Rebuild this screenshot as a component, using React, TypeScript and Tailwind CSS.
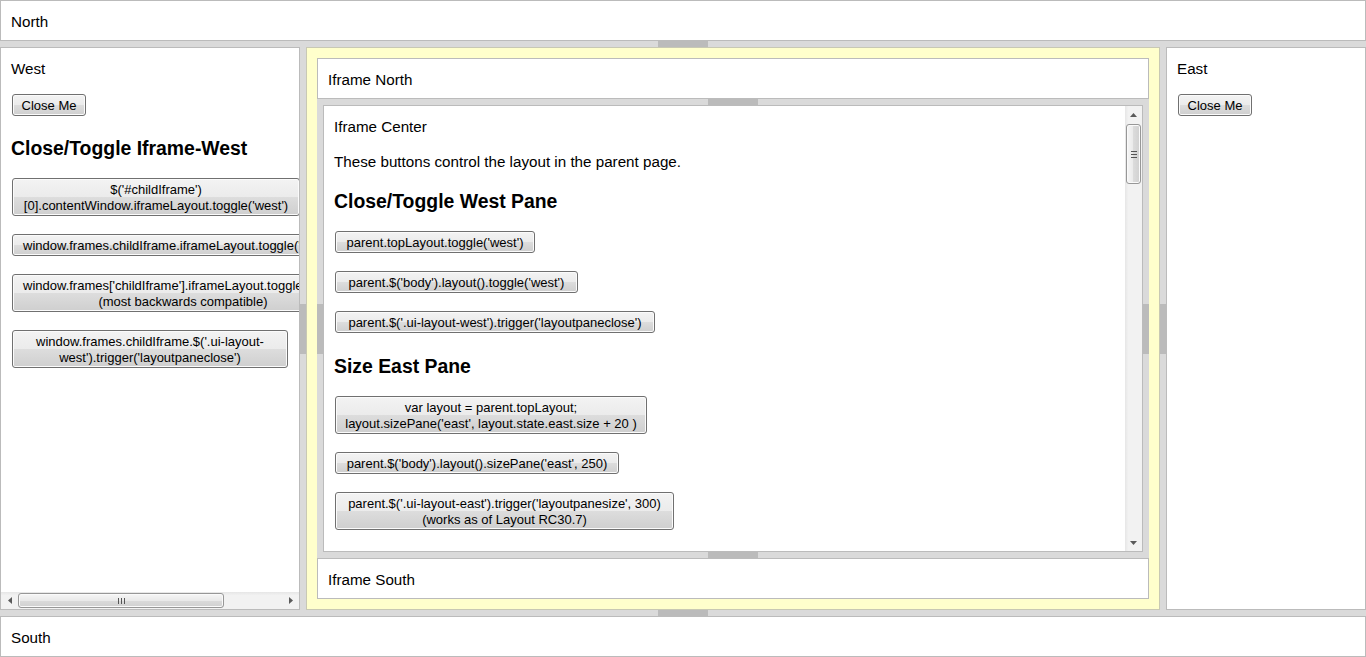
import React from 'react';

// Win7-ish push button
const Btn: React.FC<{ className?: string; children: React.ReactNode }> = ({ className = '', children }) => (
  <button
    type="button"
    className={`block shrink-0 ml-px border border-[#707070] rounded-[3px] bg-[linear-gradient(#f3f3f3,#ebebeb_50%,#dddddd_50%,#cfcfcf)] shadow-[inset_0_0_0_1px_#fbfbfb] pt-[3px] pb-[1px] text-center text-[13px] leading-[16px] text-black whitespace-nowrap ${className}`}
  >
    {children}
  </button>
);

const HResizer: React.FC = () => (
  <div className="h-[6px] shrink-0 flex justify-center">
    <div className="w-[50px] h-full bg-[#bbbbbb]" />
  </div>
);

const VResizer: React.FC = () => (
  <div className="w-[6px] shrink-0 flex items-center">
    <div className="h-[50px] w-full bg-[#bbbbbb]" />
  </div>
);

const Arrow: React.FC<{ dir: 'up' | 'down' | 'left' | 'right' }> = ({ dir }) => {
  const pts = {
    up: '0,4 3.5,0 7,4',
    down: '0,0 7,0 3.5,4',
    left: '4,0 4,7 0,3.5',
    right: '0,0 0,7 4,3.5',
  }[dir];
  const vert = dir === 'up' || dir === 'down';
  return (
    <svg width={vert ? 7 : 4} height={vert ? 4 : 7} viewBox={vert ? '0 0 7 4' : '0 0 4 7'}>
      <polygon points={pts} fill="#5a5a5a" />
    </svg>
  );
};

const HScrollbar: React.FC = () => (
  <div className="h-[17px] shrink-0 flex bg-[linear-gradient(#e6e6e6,#f2f2f2_20%,#f2f2f2)]">
    <div className="w-[17px] flex items-center justify-center">
      <Arrow dir="left" />
    </div>
    <div className="flex-1 flex items-center">
      <div className="w-[206px] h-[15px] border border-[#979797] rounded-[3px] bg-[linear-gradient(#f6f6f6,#e9e9e9_50%,#dbdbdb_50%,#d0d0d0)] shadow-[inset_0_0_0_1px_#fafafa] flex items-center justify-center gap-[2px]">
        <div className="w-px h-[6px] bg-[#555]" />
        <div className="w-px h-[6px] bg-[#555]" />
        <div className="w-px h-[6px] bg-[#555]" />
      </div>
    </div>
    <div className="w-[17px] flex items-center justify-center">
      <Arrow dir="right" />
    </div>
  </div>
);

const VScrollbar: React.FC = () => (
  <div className="w-[17px] shrink-0 flex flex-col bg-[linear-gradient(90deg,#e6e6e6,#f2f2f2_20%,#f2f2f2)]">
    <div className="h-[17px] flex items-center justify-center">
      <Arrow dir="up" />
    </div>
    <div className="flex-1 flex flex-col items-center">
      <div className="h-[60px] w-[15px] mt-px border border-[#979797] rounded-[3px] bg-[linear-gradient(90deg,#f6f6f6,#e9e9e9_50%,#dbdbdb_50%,#d0d0d0)] shadow-[inset_0_0_0_1px_#fafafa] flex flex-col items-center justify-center gap-[2px]">
        <div className="h-px w-[6px] bg-[#555]" />
        <div className="h-px w-[6px] bg-[#555]" />
        <div className="h-px w-[6px] bg-[#555]" />
      </div>
    </div>
    <div className="h-[17px] flex items-center justify-center">
      <Arrow dir="down" />
    </div>
  </div>
);

const Bar: React.FC<{ label: string; className?: string }> = ({ label, className = '' }) => (
  <div className={`h-[41px] shrink-0 bg-white border border-[#bbbbbb] pl-[10px] pt-[12px] leading-[18px] ${className}`}>
    {label}
  </div>
);

const h3 = 'font-bold text-[19.4px] leading-[22px]';

const App: React.FC = () => {
  return (
    <div className="w-[1366px] h-[657px] overflow-hidden bg-[#dadada] flex flex-col text-black text-[15.2px] font-['Liberation_Sans',Arial,sans-serif]">
      <Bar label="North" />
      <HResizer />

      <div className="h-[563px] flex">
        {/* West */}
        <div className="w-[300px] shrink-0 bg-white border border-[#bbbbbb] flex flex-col">
          <div className="flex-1 overflow-hidden pl-[10px] pt-[12px] flex flex-col items-start">
            <div className="leading-[18px]">West</div>
            <Btn className="mt-[16px] w-[74px]">Close Me</Btn>
            <h3 className={`mt-[21px] ${h3}`}>Close/Toggle Iframe-West</h3>
            <Btn className="mt-[19px] w-[288px]">
              $('#childIframe')
              <br />
              [0].contentWindow.iframeLayout.toggle('west')
            </Btn>
            <Btn className="mt-[18px] px-[10px]">window.frames.childIframe.iframeLayout.toggle('west')</Btn>
            <Btn className="mt-[18px] px-[10px]">
              window.frames['childIframe'].iframeLayout.toggle('west')
              <br />
              (most backwards compatible)
            </Btn>
            <Btn className="mt-[18px] w-[276px]">
              window.frames.childIframe.$('.ui-layout-
              <br />
              west').trigger('layoutpaneclose')
            </Btn>
          </div>
          <HScrollbar />
        </div>

        <VResizer />

        {/* Center: holds the child iframe */}
        <div className="w-[854px] shrink-0 bg-[#ffffcc] border border-[#c8c8b4] p-[10px]">
          <div className="h-full flex flex-col bg-[#dadada]">
            <Bar label="Iframe North" />
            <HResizer />
            <div className="flex-1 flex min-h-0">
              <VResizer />
              <div className="flex-1 bg-white border border-[#bbbbbb] flex min-w-0">
                <div className="flex-1 overflow-hidden pl-[10px] pt-[12px] flex flex-col items-start">
                  <div className="leading-[18px]">Iframe Center</div>
                  <p className="mt-[17px] leading-[18px]">These buttons control the layout in the parent page.</p>
                  <h3 className={`mt-[19px] ${h3}`}>Close/Toggle West Pane</h3>
                  <Btn className="mt-[19px] w-[200px]">parent.topLayout.toggle('west')</Btn>
                  <Btn className="mt-[18px] w-[243px]">parent.$('body').layout().toggle('west')</Btn>
                  <Btn className="mt-[18px] w-[320px]">parent.$('.ui-layout-west').trigger('layoutpaneclose')</Btn>
                  <h3 className={`mt-[22px] ${h3}`}>Size East Pane</h3>
                  <Btn className="mt-[19px] w-[312px]">
                    var layout = parent.topLayout;
                    <br />
                    layout.sizePane('east', layout.state.east.size + 20 )
                  </Btn>
                  <Btn className="mt-[18px] w-[284px]">parent.$('body').layout().sizePane('east', 250)</Btn>
                  <Btn className="mt-[18px] w-[339px]">
                    parent.$('.ui-layout-east').trigger('layoutpanesize', 300)
                    <br />
                    (works as of Layout RC30.7)
                  </Btn>
                </div>
                <VScrollbar />
              </div>
              <VResizer />
            </div>
            <HResizer />
            <Bar label="Iframe South" />
          </div>
        </div>

        <VResizer />

        {/* East */}
        <div className="flex-1 bg-white border border-[#bbbbbb] pl-[10px] pt-[12px] flex flex-col items-start">
          <div className="leading-[18px]">East</div>
          <Btn className="mt-[16px] w-[74px]">Close Me</Btn>
        </div>
      </div>

      <HResizer />
      <Bar label="South" />
    </div>
  );
};

export default App;
